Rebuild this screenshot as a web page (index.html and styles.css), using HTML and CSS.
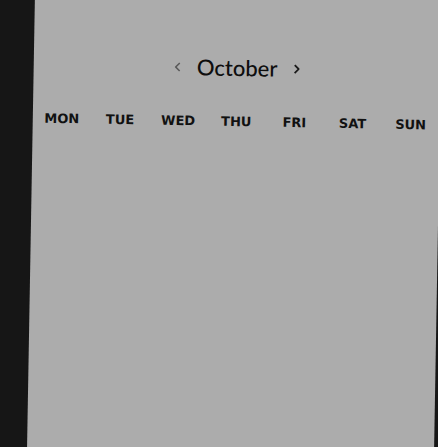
FILE: index.html
```html
<!DOCTYPE html>
<html lang="en">
<head>
    <meta charset="UTF-8">
    <meta name="viewport" content="width=device-width, initial-scale=1.0">
    <title>Calendar</title>
    <link rel="stylesheet" href="styles.css">
</head>
<body>
    <div id="calendar-sheet">
        <div id="month-bar">
            <button class="month-nav prev" aria-label="Previous month">
                <svg width="6" height="10" viewBox="0 0 6 10"><polyline points="5,1 1,5 5,9" fill="none" stroke="currentColor" stroke-width="1.6"/></svg>
            </button>
            <div id="month-name">October</div>
            <button class="month-nav next" aria-label="Next month">
                <svg width="6" height="10" viewBox="0 0 6 10"><polyline points="1,1 5,5 1,9" fill="none" stroke="currentColor" stroke-width="1.8"/></svg>
            </button>
        </div>
        <div id="weekdays">
            <div class="weekday">MON</div>
            <div class="weekday">TUE</div>
            <div class="weekday">WED</div>
            <div class="weekday">THU</div>
            <div class="weekday">FRI</div>
            <div class="weekday">SAT</div>
            <div class="weekday">SUN</div>
        </div>
    </div>
</body>
</html>
```

FILE: styles.css
```css
html, body {
    height: 100%;
}
body {
    margin: 0;
    overflow: hidden;
    background-color: #161616;
    font-family: "DejaVu Sans", Verdana, sans-serif;
}
#calendar-sheet {
    width: 407px;
    height: 480px;
    margin-left: 31px;
    margin-top: -17px;
    padding-top: 72px;
    box-sizing: border-box;
    background-color: #acacac;
    transform: rotate(1deg);
}
#month-bar {
    display: flex;
    justify-content: center;
    align-items: center;
    gap: 16px;
    height: 26px;
}
#month-name {
    font-family: Lato, "Noto Sans", sans-serif;
    font-size: 22px;
    font-weight: 500;
    color: #0e0e0e;
    line-height: 26px;
}
.month-nav {
    border: none;
    padding: 0;
    background: none;
    display: flex;
    cursor: pointer;
}
.month-nav.prev {
    color: #5a5a5a;
}
.month-nav.next {
    color: #1a1a1a;
}
#weekdays {
    display: grid;
    grid-template-columns: repeat(7, 1fr);
    margin-top: 33px;
}
.weekday {
    text-align: center;
    font-size: 13px;
    font-weight: bold;
    color: #111;
    line-height: 16px;
}
```
